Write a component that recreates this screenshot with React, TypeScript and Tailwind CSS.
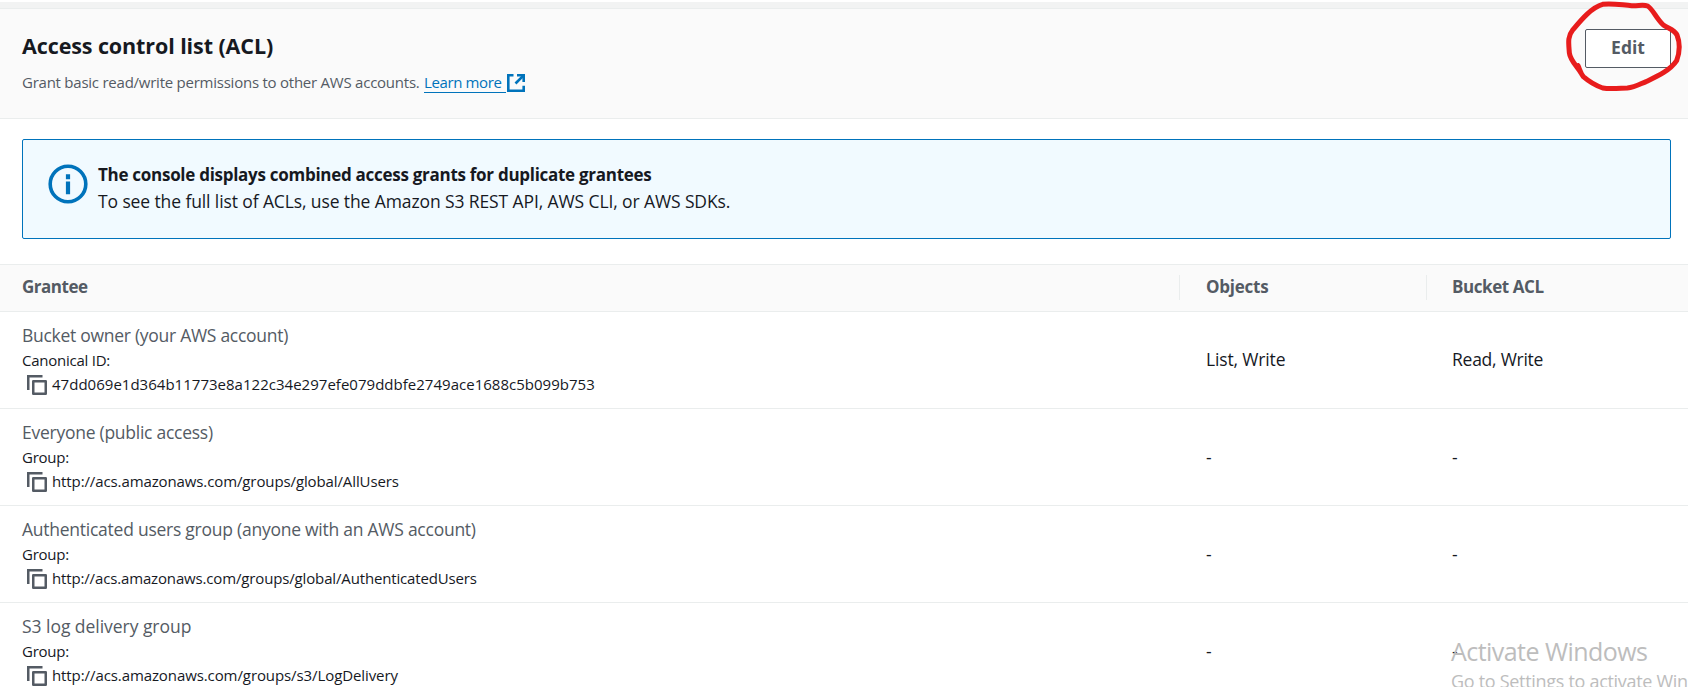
import React from "react";

type Row = {
  title: string;
  titleClass: string;
  label: string;
  value: string;
  valueClass: string;
  objects: string;
  acl: string;
  cellClass: string;
};

const rows: Row[] = [
  {
    title: "Bucket owner (your AWS account)",
    titleClass: "tracking-[-0.28px]",
    label: "Canonical ID:",
    value: "47dd069e1d364b11773e8a122c34e297efe079ddbfe2749ace1688c5b099b753",
    valueClass: "tracking-[0.02px]",
    objects: "List, Write",
    acl: "Read, Write",
    cellClass: "pb-0.5",
  },
  {
    title: "Everyone (public access)",
    titleClass: "tracking-[-0.26px]",
    label: "Group:",
    value: "http://acs.amazonaws.com/groups/global/AllUsers",
    valueClass: "tracking-[-0.11px]",
    objects: "-",
    acl: "-",
    cellClass: "pb-0",
  },
  {
    title: "Authenticated users group (anyone with an AWS account)",
    titleClass: "tracking-[-0.25px]",
    label: "Group:",
    value: "http://acs.amazonaws.com/groups/global/AuthenticatedUsers",
    valueClass: "tracking-[-0.15px]",
    objects: "-",
    acl: "-",
    cellClass: "pb-0",
  },
  {
    title: "S3 log delivery group",
    titleClass: "tracking-[-0.04px]",
    label: "Group:",
    value: "http://acs.amazonaws.com/groups/s3/LogDelivery",
    valueClass: "tracking-[-0.09px]",
    objects: "-",
    acl: "-",
    cellClass: "pb-0",
  },
];

function ExternalIcon() {
  return (
    <svg className="mt-0.5 h-5 w-5 shrink-0" viewBox="0 0 20 20" fill="none" stroke="#0073bb" strokeWidth="2.6">
      <path d="M7.5 2.3H2.3v15.4h15.4v-5" />
      <path d="M11 2.3h6.7V9" />
      <path d="M9.5 10.5l7.6-7.6" />
    </svg>
  );
}

function CopyIcon() {
  return (
    <svg className="mt-px h-5 w-5 shrink-0" viewBox="0 0 20 20" fill="none" stroke="#545b64" strokeWidth="2.5">
      <path d="M1.25 15V1.25H15.5" />
      <path d="M6.25 6.25h12.5v12.5H6.25z" strokeLinejoin="round" />
    </svg>
  );
}

function InfoIcon() {
  return (
    <svg className="h-10 w-10 shrink-0" viewBox="0 0 40 40" fill="none" stroke="#0073bb">
      <circle cx="20" cy="20" r="17.8" strokeWidth="3.6" />
      <path d="M20 10.2v5M20 17.4v12.8" strokeWidth="4.2" />
    </svg>
  );
}

export default function App() {
  return (
    <div className="relative h-[687px] w-[1688px] overflow-hidden bg-white pt-0.5 font-['Open_Sans','Noto_Sans',sans-serif] text-[17.5px] text-[#16191f]">
      <div className="h-1.5 bg-[#f2f3f3]" />
      <header className="flex h-[111px] items-start justify-between border-y border-[#eaeded] bg-[#fafafa] pl-[22px] pr-[17px]">
        <div>
          <h2 className="mt-5 text-[21.5px] font-bold leading-[34px] tracking-[-0.1px]">
            Access control list (ACL)
          </h2>
          <p className="mt-[7px] flex h-6 items-center text-[15px] leading-6 text-[#545b64]">
            <span className="w-[402px] whitespace-nowrap tracking-[-0.24px]">
              Grant basic read/write permissions to other AWS accounts.
            </span>
            <a className="flex items-center text-[#0073bb]" href="#">
              <span className="h-[21px] w-[82px] border-b border-[#0073bb] leading-[21px] tracking-[-0.38px]">
                Learn more
              </span>
              <ExternalIcon />
            </a>
          </p>
        </div>
        <button className="mt-5 h-[39px] w-[86px] rounded-[2px] border border-[#545b64] bg-white pb-px text-[17.5px] font-bold leading-none text-[#545b64]">
          Edit
        </button>
      </header>

      <section className="ml-[22px] mr-[17px] mt-5 flex h-[100px] rounded-[2px] border border-[#0073bb] bg-[#f1faff] pl-[25px] pt-6">
        <InfoIcon />
        <div className="ml-[10px] -mt-[3px] leading-[27px]">
          <p className="text-[17px] font-bold tracking-[-0.28px]">
            The console displays combined access grants for duplicate grantees
          </p>
          <p className="tracking-[-0.11px]">
            To see the full list of ACLs, use the Amazon S3 REST API, AWS CLI, or AWS SDKs.
          </p>
        </div>
      </section>

      <div className="mt-[25px]">
        <div className="grid h-12 grid-cols-[1180px_247px_1fr] border-y border-[#eaeded] bg-[#fafafa] text-[17px] font-bold leading-[24px] text-[#545b64]">
          <div className="mt-[10px] h-[25px] border-r border-[#eaeded] pl-[22px] tracking-[-0.48px]">Grantee</div>
          <div className="mt-[10px] h-[25px] border-r border-[#eaeded] pl-[26px] tracking-[-0.25px]">Objects</div>
          <div className="mt-[10px] pl-[25px] tracking-[-0.42px]">Bucket ACL</div>
        </div>
        {rows.map((r) => (
          <div key={r.title} className="grid h-[97px] grid-cols-[1180px_247px_1fr] border-b border-[#eaeded]">
            <div className="pl-[22px] pt-[10px]">
              <div className={`leading-[27px] text-[#545b64] ${r.titleClass}`}>{r.title}</div>
              <div className="text-[15px] leading-[23px] tracking-[-0.25px]">{r.label}</div>
              <div className="flex h-6 items-center gap-[5px] pl-[5px] text-[15px] leading-6">
                <CopyIcon />
                <span className={r.valueClass}>{r.value}</span>
              </div>
            </div>
            <div className={`flex items-center pl-[26px] tracking-[-0.15px] ${r.cellClass}`}>{r.objects}</div>
            <div className={`flex items-center pl-[25px] tracking-[-0.25px] ${r.cellClass}`}>{r.acl}</div>
          </div>
        ))}
      </div>

      <div className="absolute left-[1451px] top-[634px] whitespace-nowrap text-[#bdbdbd]">
        <div className="text-[25px] leading-[34px] tracking-[-0.55px]">Activate Windows</div>
        <div className="text-[18px] leading-[26px] tracking-[-0.3px]">Go to Settings to activate Windows.</div>
      </div>

      <svg
        className="absolute right-0 top-0 h-[130px] w-[148px]"
        viewBox="0 0 444 390"
        fill="none"
        stroke="#e81c1c"
        strokeWidth="15"
        strokeLinecap="round"
        strokeLinejoin="round"
      >
        <path d="M114 197L123 219C112 200 90 180 88 158C86 130 82 110 98 90C125 58 155 22 188 13C215 9 245 15 275 17C295 18 310 13 323 18C340 29 348 55 370 75C385 86 402 88 411 105C421 130 418 160 410 182C390 212 350 230 320 244C300 252 285 262 262 264C235 265 210 268 188 264C165 256 145 243 130 230C122 220 120 210 114 197" />
      </svg>
    </div>
  );
}
